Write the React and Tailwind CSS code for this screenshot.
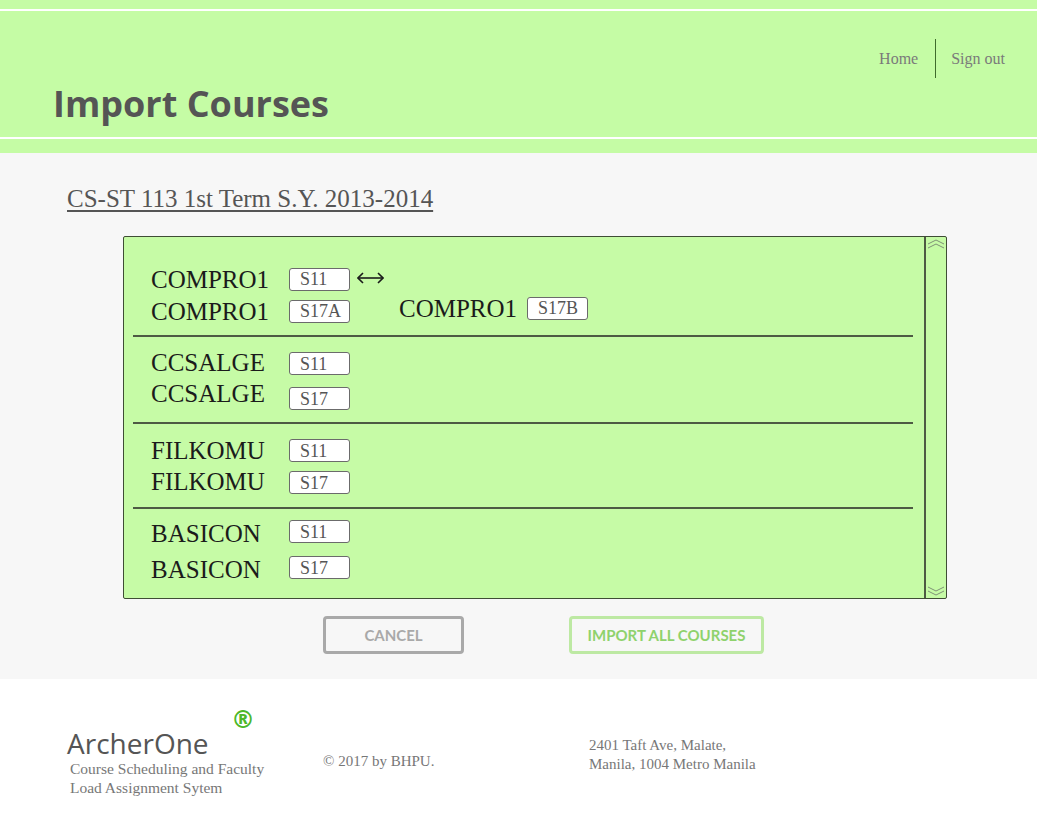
function Box({ label, className = "" }) {
  return (
    <span
      className={
        "flex h-[23px] w-[61px] shrink-0 items-center rounded-[3px] border border-[#6b6b6b] bg-white pl-[10px] font-['Liberation_Serif',serif] text-[18px] leading-none text-[#555] " +
        className
      }
    >
      {label}
    </span>
  );
}

function Line({ name, label, boxClass, className = "", children }) {
  return (
    <div className={"flex h-[32px] items-center " + className}>
      <span className="w-[138px] shrink-0 font-['Liberation_Serif',serif] text-[25px] leading-none text-[#1b1b1b]">
        {name}
      </span>
      <Box label={label} className={boxClass} />
      {children}
    </div>
  );
}

function Divider() {
  return <div className="ml-[9px] mr-[11px] h-[2px] bg-[#4d5a43]" />;
}

export default function App() {
  return (
    <div className="min-h-[819px] w-full bg-white font-['Liberation_Serif',serif]">
      {/* header */}
      <header className="bg-[#c5fca5] pt-[9px] pb-[14px]">
        <div className="h-[130px] border-y-2 border-white">
          <nav className="flex items-center justify-end pt-[28px] pr-[32px] text-[16px] text-[#7a7a7a]">
            <a className="leading-none">Home</a>
            <span className="ml-[17px] mr-[15px] h-[39px] w-px bg-[#3f6b2c]" />
            <a className="leading-none">Sign out</a>
          </nav>
          <h1 className="mt-[8px] pl-[53px] font-['Open_Sans',sans-serif] text-[36px] font-bold leading-[36px] text-[#555]">
            Import Courses
          </h1>
        </div>
      </header>

      {/* main */}
      <main className="h-[526px] bg-[#f7f7f7] pt-[30px]">
        <h2 className="pl-[67px] text-[25px] leading-[32px] text-[#555] underline decoration-[1.5px] underline-offset-[3px]">
          CS-ST 113 1st Term S.Y. 2013-2014
        </h2>

        <div className="ml-[123px] mt-[21px] flex w-[824px] rounded-[2px] border border-[#3f4d35] bg-[#c6fba6]">
          <div className="flex-1">
            <div className="h-[98px] pt-[26px] pl-[27px]">
              <Line name="COMPRO1" label="S11">
                <svg className="ml-[7px] mb-[2px]" width="27" height="12" viewBox="0 0 27 12" fill="none" stroke="#1b1b1b" strokeWidth="1.6">
                  <line x1="1" y1="6" x2="26" y2="6" />
                  <polyline points="6,1 1,6 6,11" />
                  <polyline points="21,1 26,6 21,11" />
                </svg>
              </Line>
              <Line name="COMPRO1" label="S17A">
                <span className="mb-[6px] ml-[49px] flex items-center">
                  <span className="w-[128px] text-[25px] leading-none text-[#1b1b1b]">COMPRO1</span>
                  <Box label="S17B" />
                </span>
              </Line>
            </div>
            <Divider />
            <div className="h-[85px] pt-[9px] pl-[27px]">
              <Line name="CCSALGE" label="S11" boxClass="mt-[3px]" />
              <Line name="CCSALGE" label="S17" className="-mt-[1px]" boxClass="mt-[11px]" />
            </div>
            <Divider />
            <div className="h-[83px] pt-[10px] pl-[27px]">
              <Line name="FILKOMU" label="S11" boxClass="mt-[1px]" />
              <Line name="FILKOMU" label="S17" className="-mt-[1px]" boxClass="mt-[3px]" />
            </div>
            <Divider />
            <div className="h-[89px] pt-[8px] pl-[27px]">
              <Line name="BASICON" label="S11" boxClass="mb-[3px]" />
              <Line name="BASICON" label="S17" className="mt-[4px]" boxClass="mb-[3px]" />
            </div>
          </div>

          <div className="flex w-[22px] flex-col items-center justify-between border-l-2 border-[#4d5a43] py-[2px]">
            <svg width="18" height="10" viewBox="0 0 18 10" fill="none" stroke="#7f9276" strokeWidth="1">
              <polyline points="1,5 9,1 17,5" />
              <polyline points="1,9 9,5 17,9" />
            </svg>
            <svg width="18" height="10" viewBox="0 0 18 10" fill="none" stroke="#7f9276" strokeWidth="1">
              <polyline points="1,1 9,5 17,1" />
              <polyline points="1,5 9,9 17,5" />
            </svg>
          </div>
        </div>

        <div className="mt-[17px] flex pl-[323px] font-['Lato',sans-serif] text-[15px] font-bold">
          <button className="h-[38px] w-[141px] rounded-[4px] border-[3px] border-[#a9a9a9] text-[#a9a9a9]">
            CANCEL
          </button>
          <button className="ml-[105px] h-[38px] w-[195px] rounded-[4px] border-[3px] border-[#bde9a3] text-[#8fd26c]">
            IMPORT ALL COURSES
          </button>
        </div>
      </main>

      {/* footer */}
      <footer className="flex h-[140px] bg-white pl-[67px]">
        <div className="w-[256px] pt-[48px]">
          <div className="relative font-['Open_Sans',sans-serif] text-[28px] leading-[32px] text-[#555]">
            ArcherOne
            <span className="absolute left-[164px] -top-[19px] font-['DejaVu_Sans',sans-serif] text-[24px] font-bold leading-none text-[#4cb82a]">
              ®
            </span>
          </div>
          <p className="pl-[3px] text-[15.5px] leading-[19px] text-[#777]">
            Course Scheduling and Faculty
            <br />
            Load Assignment Sytem
          </p>
        </div>
        <div className="w-[266px] pt-[73px] text-[15px] leading-[19px] text-[#777]">© 2017 by BHPU.</div>
        <div className="pt-[57px] text-[15px] leading-[19px] text-[#777]">
          2401 Taft Ave, Malate,
          <br />
          Manila, 1004 Metro Manila
        </div>
      </footer>
    </div>
  );
}
